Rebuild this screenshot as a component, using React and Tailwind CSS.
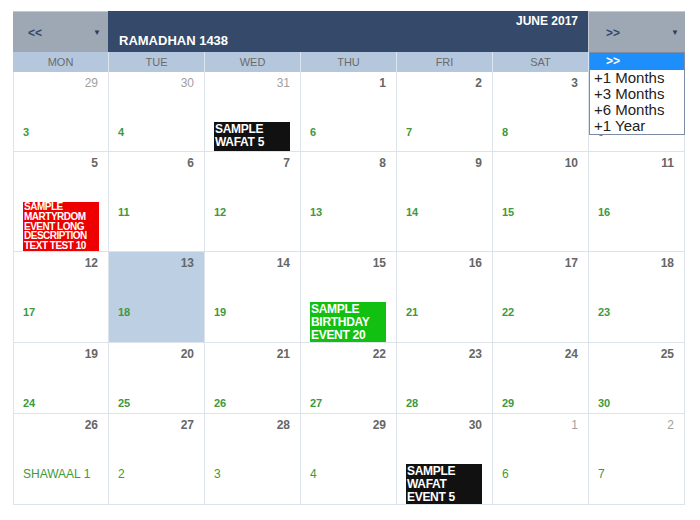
const weeks = [
  [
    { d: 29, other: true, h: "3" },
    { d: 30, other: true, h: "4" },
    { d: 31, other: true, ev: { text: "SAMPLE WAFAT 5", kind: "black" } },
    { d: 1, h: "6" },
    { d: 2, h: "7" },
    { d: 3, h: "8" },
    { d: 4, h: "9" },
  ],
  [
    { d: 5, ev: { text: "SAMPLE MARTYRDOM EVENT LONG DESCRIPTION TEXT TEST 10", kind: "red" } },
    { d: 6, h: "11" },
    { d: 7, h: "12" },
    { d: 8, h: "13" },
    { d: 9, h: "14" },
    { d: 10, h: "15" },
    { d: 11, h: "16" },
  ],
  [
    { d: 12, h: "17" },
    { d: 13, h: "18", selected: true },
    { d: 14, h: "19" },
    { d: 15, ev: { text: "SAMPLE BIRTHDAY EVENT 20", kind: "green" } },
    { d: 16, h: "21" },
    { d: 17, h: "22" },
    { d: 18, h: "23" },
  ],
  [
    { d: 19, h: "24" },
    { d: 20, h: "25" },
    { d: 21, h: "26" },
    { d: 22, h: "27" },
    { d: 23, h: "28" },
    { d: 24, h: "29" },
    { d: 25, h: "30" },
  ],
  [
    { d: 26, h: "SHAWAAL 1", plain: true },
    { d: 27, h: "2", plain: true },
    { d: 28, h: "3", plain: true },
    { d: 29, h: "4", plain: true },
    { d: 30, ev: { text: "SAMPLE WAFAT EVENT 5", kind: "black" } },
    { d: 1, other: true, h: "6", plain: true },
    { d: 2, other: true, h: "7", plain: true },
  ],
];

const days = ["MON", "TUE", "WED", "THU", "FRI", "SAT", "SUN"];

function Event({ ev }) {
  if (ev.kind === "red") {
    return (
      <div className="w-[76px] bg-[#ee0000] text-white font-bold text-[10px] leading-[9.8px] tracking-[-0.5px] pl-[1px]">
        {ev.text}
      </div>
    );
  }
  const bg = ev.kind === "green" ? "bg-[#11c011]" : "bg-[#111111]";
  return (
    <div className={`w-[76px] min-h-[29px] ${bg} text-white font-bold text-[12px] leading-[13px] tracking-[-0.3px] pl-[1px] pt-[1px]`}>
      {ev.text}
    </div>
  );
}

function Cell({ c, first }) {
  return (
    <div
      className={`border-r border-b border-[#dde3eb] pt-[3px] ${first ? "border-l" : ""} ${
        c.selected ? "bg-[#bccfe3]" : "bg-white"
      }`}
    >
      <div
        className={`h-[16px] leading-[16px] text-right pr-[10px] text-[12px] ${
          c.other ? "text-[#a0a0a0] font-normal" : "text-[#666] font-bold"
        }`}
      >
        {c.d}
      </div>
      <div className="mt-[31px] pl-[9px]">
        {c.ev ? (
          <Event ev={c.ev} />
        ) : (
          <div
            className={`leading-[20px] text-[#3c9a3c] ${
              c.plain ? "text-[12px] font-normal" : "text-[11px] font-bold"
            }`}
          >
            {c.h}
          </div>
        )}
      </div>
    </div>
  );
}

export default function App() {
  return (
    <div className="min-h-[520px] bg-white pt-[11px] pl-[13px]" style={{ fontFamily: '"Liberation Sans", Arial, sans-serif' }}>
      <div className="w-[672px] relative">
        <div className="grid grid-cols-[95px_1fr_97px] h-[41px]">
          <div className="bg-[#9ea8b5] border-t border-[#c3cad3] flex items-center justify-between pl-[15px] pr-[7px] pt-[2px]">
            <span className="text-[12px] font-bold text-[#34496a]">&lt;&lt;</span>
            <span className="text-[8px] text-[#2c3e5a]">▼</span>
          </div>
          <div className="bg-[#354a6b] flex flex-col justify-between pt-[3px] pb-[4px] px-[11px] text-white font-bold">
            <div className="text-right text-[12px] leading-[14px] -mr-[1px]">JUNE 2017</div>
            <div className="text-[13px] leading-[15px]">RAMADHAN 1438</div>
          </div>
          <div className="bg-[#9ea8b5] border-t border-l border-[#c3cad3] flex items-center justify-between pl-[17px] pr-[6px] pt-[2px]">
            <span className="text-[12px] font-bold text-[#34496a]">&gt;&gt;</span>
            <span className="text-[8px] text-[#2c3e5a]">▼</span>
          </div>
        </div>
        <div className="grid grid-cols-7 h-[20px] bg-[#b5c7dc]">
          {days.map((d) => (
            <div key={d} className="border-r border-[#dbe3ec] text-center text-[11px] leading-[20px] text-[#6b6b6b]">
              {d}
            </div>
          ))}
        </div>
        <div>
          {weeks.map((w, i) => (
            <div key={i} className="grid grid-cols-7">
              {w.map((c, j) => (
                <Cell key={j} c={c} first={j === 0} />
              ))}
            </div>
          ))}
        </div>
        <div className="absolute top-[41px] left-[576px] w-[96px] bg-white border border-[#7d8ca2] z-10 text-[15px] leading-[16px] text-[#222]">
          <div className="bg-[#1e8ffa] text-white font-bold text-[12px] leading-[17px] h-[17px] pl-[16px]">&gt;&gt;</div>
          <div className="pl-[4px]">+1 Months</div>
          <div className="pl-[4px]">+3 Months</div>
          <div className="pl-[4px]">+6 Months</div>
          <div className="pl-[4px]">+1 Year</div>
        </div>
      </div>
    </div>
  );
}
